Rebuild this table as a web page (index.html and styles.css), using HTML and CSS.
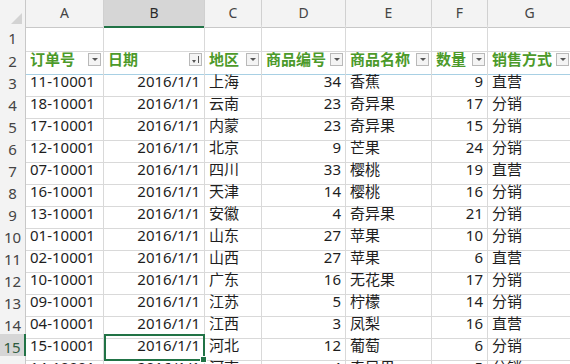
FILE: index.html
```html
<!DOCTYPE html>
<html lang="zh">
<head>
<meta charset="utf-8">
<link rel="stylesheet" href="styles.css">
</head>
<body>
<div class="sheet">
  <div class="row colhead">
    <div class="corner"><span class="tri"></span></div>
    <div class="ch">A</div><div class="ch sel">B</div><div class="ch">C</div><div class="ch">D</div><div class="ch">E</div><div class="ch">F</div><div class="ch">G</div>
  </div>
  <div class="row r1">
    <div class="rh">1</div>
    <div class="c"></div><div class="c"></div><div class="c"></div><div class="c"></div><div class="c"></div><div class="c"></div><div class="c"></div>
  </div>
  <div class="row thead">
    <div class="rh">2</div>
    <div class="c th"><span>订单号</span><i class="fb"></i></div>
    <div class="c th"><span>日期</span><i class="fb sort"></i></div>
    <div class="c th"><span>地区</span><i class="fb"></i></div>
    <div class="c th"><span>商品编号</span><i class="fb"></i></div>
    <div class="c th"><span>商品名称</span><i class="fb"></i></div>
    <div class="c th"><span>数量</span><i class="fb"></i></div>
    <div class="c th"><span>销售方式</span><i class="fb"></i></div>
  </div>
  <div id="body"></div>
</div>
<script src="app.js"></script>
</body>
</html>
```
FILE: app.js
```js
const data = [
  ["11-10001","上海",34,"香蕉",9,"直营"],
  ["18-10001","云南",23,"奇异果",17,"分销"],
  ["17-10001","内蒙",23,"奇异果",15,"分销"],
  ["12-10001","北京",9,"芒果",24,"分销"],
  ["07-10001","四川",33,"樱桃",19,"直营"],
  ["16-10001","天津",14,"樱桃",16,"分销"],
  ["13-10001","安徽",4,"奇异果",21,"分销"],
  ["01-10001","山东",27,"苹果",10,"分销"],
  ["02-10001","山西",27,"苹果",6,"直营"],
  ["10-10001","广东",16,"无花果",17,"分销"],
  ["09-10001","江苏",5,"柠檬",14,"分销"],
  ["04-10001","江西",3,"凤梨",16,"直营"],
  ["15-10001","河北",12,"葡萄",6,"分销"],
  ["14-10001","河南",4,"奇异果",5,"分销"]
];
const body = document.getElementById("body");
data.forEach((d, i) => {
  const n = i + 3;
  const row = document.createElement("div");
  row.className = "row";
  const selRow = n === 15;
  row.innerHTML =
    `<div class="rh${selRow ? " sel" : ""}">${n}</div>` +
    `<div class="c">${d[0]}</div>` +
    `<div class="c num${selRow ? " active" : ""}">2016/1/1${selRow ? '<i class="handle"></i>' : ""}</div>` +
    `<div class="c">${d[1]}</div>` +
    `<div class="c num">${d[2]}</div>` +
    `<div class="c">${d[3]}</div>` +
    `<div class="c num">${d[4]}</div>` +
    `<div class="c">${d[5]}</div>`;
  body.appendChild(row);
});
```
FILE: styles.css
```css
html, body {
  margin: 0;
  padding: 0;
  background: #fff;
  overflow: hidden;
}
.sheet {
  width: 570px;
  height: 364px;
  overflow: hidden;
  font-family: "Noto Sans", "Noto Sans CJK SC", sans-serif;
  font-size: 15px;
  color: #1e1e1e;
}
.row {
  display: grid;
  grid-template-columns: 26px 78px 101px 57px 84px 86px 56px 84px;
  height: 22px;
}
.colhead { height: 25px; }
.r1 { height: 23px; }
.row > div {
  box-sizing: border-box;
  border-right: 1px solid #d9d9d9;
  border-bottom: 1px solid #d9d9d9;
  position: relative;
  white-space: nowrap;
  overflow: visible;
  line-height: 21px;
}
.corner {
  background: #f3f3f3;
  border-right: 1px solid #c8c8c8 !important;
  border-bottom: 1px solid #c8c8c8 !important;
}
.tri {
  position: absolute;
  right: 3px;
  bottom: 3px;
  width: 0;
  height: 0;
  border-left: 11px solid transparent;
  border-bottom: 11px solid #d3d3d3;
}
.ch {
  background: #f3f3f3;
  text-align: center;
  font-family: "Noto Sans", sans-serif;
  font-size: 14px;
  color: #444;
  line-height: 26px !important;
  border-bottom: 1px solid #c8c8c8 !important;
  border-right: 1px solid #d0d0d0 !important;
}
.ch.sel {
  background: #d6d6d6;
  color: #2a2a2a;
  border-bottom: 2px solid #217346 !important;
}
.rh {
  background: #f3f3f3;
  text-align: center;
  font-family: "Noto Sans", sans-serif;
  font-size: 15px;
  color: #444;
  line-height: 26px !important;
  border-right: 1px solid #c8c8c8 !important;
  border-bottom: 1px solid #dadada !important;
}
.rh.sel {
  background: #d6d6d6;
  color: #2e5c40;
  border-right: 2px solid #217346 !important;
}
.c {
  padding: 0 4px;
  line-height: 23px !important;
}
.num { text-align: right; }
.thead .c { border-bottom: 1px solid #a8d0e4; }
.th {
  color: #4c9a2a;
  font-weight: bold;
  line-height: 22px !important;
}
.fb {
  position: absolute;
  right: 2px;
  top: 5px;
  width: 13px;
  height: 13px;
  box-sizing: border-box;
  border: 1px solid #b9b9b9;
  background: #f4f4f4;
}
.fb::after {
  content: "";
  position: absolute;
  left: 3px;
  top: 4px;
  border-left: 3px solid transparent;
  border-right: 3px solid transparent;
  border-top: 3px solid #555;
}
.fb.sort::after {
  left: 2px;
  top: 6px;
  border-left: 2px solid transparent;
  border-right: 2px solid transparent;
  border-top: 3px solid #555;
}
.fb.sort::before {
  content: "";
  position: absolute;
  left: 8px;
  top: 2px;
  width: 1px;
  height: 7px;
  background: #555;
}
.active {
  outline: 2px solid #217346;
  outline-offset: -2px;
  z-index: 2;
}
.handle {
  position: absolute;
  right: -3px;
  bottom: -3px;
  width: 5px;
  height: 5px;
  background: #217346;
  border: 1px solid #fff;
}
```
